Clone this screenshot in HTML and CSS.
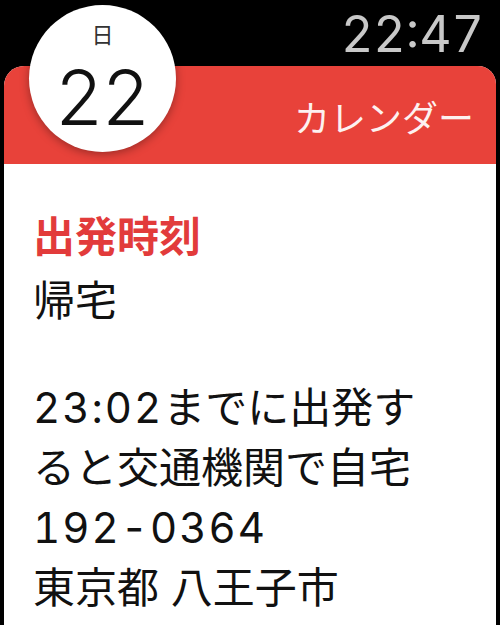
FILE: index.html
```html
<!DOCTYPE html>
<html lang="ja">
<head>
<meta charset="utf-8">
<link rel="stylesheet" href="styles.css">
</head>
<body>
<div class="screen">
  <div class="status"><span class="time">22:47</span></div>
  <div class="card">
    <div class="header"><span class="app">カレンダー</span></div>
    <div class="content">
      <div class="title">出発時刻</div>
      <div class="subtitle">帰宅</div>
      <div class="message"><span class="num">23:02</span>までに出発す<br>ると交通機関で自宅<br><span class="num">192-0364</span><br>東京都 八王子市</div>
    </div>
  </div>
  <div class="badge">
    <span class="weekday">日</span>
    <span class="day">22</span>
  </div>
</div>
</body>
</html>
```
FILE: styles.css
```css
html, body {
  margin: 0;
  padding: 0;
  background: #000;
}
body {
  width: 500px;
  height: 625px;
  overflow: hidden;
  font-family: Inter, "Noto Sans CJK JP", sans-serif;
}
.screen {
  position: relative;
  width: 500px;
  height: 625px;
  overflow: hidden;
  display: flex;
  flex-direction: column;
}
.status {
  height: 66px;
  flex: none;
  display: flex;
  justify-content: flex-end;
  align-items: flex-start;
  padding-right: 16px;
  box-sizing: border-box;
}
.time {
  color: #c8c8c8;
  font-size: 50px;
  line-height: 50px;
  margin-top: 9px;
  font-weight: 400;
  letter-spacing: 0;
  font-variant-numeric: tabular-nums;
}
.card {
  flex: 1;
  margin: 0 4px;
  background: #fff;
  border-radius: 20px 18px 0 0;
  overflow: hidden;
}
.header {
  height: 98px;
  background: #e8423a;
  display: flex;
  align-items: center;
  justify-content: flex-end;
  padding-right: 22px;
}
.app {
  color: #fdf1f0;
  font-family: "Noto Sans CJK JP", sans-serif;
  font-size: 36px;
  line-height: 40px;
  margin-top: 2px;
}
.content {
  padding: 40px 29px 0;
  color: #111;
  font-family: Inter, "Noto Sans CJK JP", sans-serif;
  font-size: 42px;
  line-height: 60px;
  white-space: nowrap;
}
.title {
  color: #e23b3b;
  font-weight: 700;
  font-family: "Noto Sans CJK JP", sans-serif;
}
.subtitle {
  margin-top: 4px;
  font-family: "Noto Sans CJK JP", sans-serif;
}
.message {
  margin-top: 50px;
}
.num {
  letter-spacing: 2px;
  font-variant-numeric: tabular-nums;
}
.badge {
  position: absolute;
  left: 29px;
  top: 5px;
  width: 147px;
  height: 147px;
  border-radius: 50%;
  background: #fff;
  box-shadow: 0 2px 10px rgba(0, 0, 0, 0.35);
  display: flex;
  flex-direction: column;
  align-items: center;
}
.weekday {
  font-family: "Noto Sans CJK JP", sans-serif;
  font-size: 22px;
  line-height: 24px;
  color: #333;
  margin-top: 16px;
}
.day {
  font-family: Inter, sans-serif;
  font-weight: 300;
  font-size: 76px;
  line-height: 60px;
  color: #111;
  margin-top: 22px;
}
```
